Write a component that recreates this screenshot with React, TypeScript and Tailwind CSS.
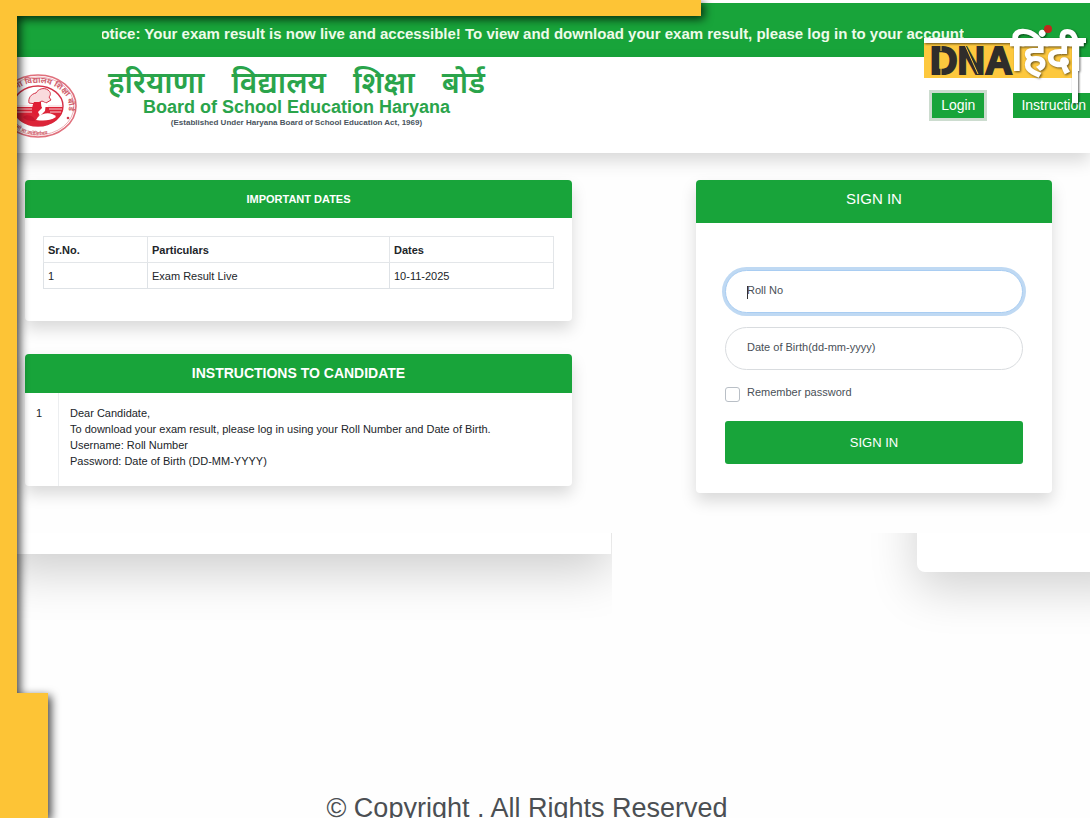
import React, { useState } from 'react';

const IMPORTANT_DATES = [{ id: 1, particulars: 'Exam Result Live', date: '10-11-2025' }];

const INSTRUCTIONS = [
  {
    id: 1,
    lines: [
      'Dear Candidate,',
      'To download your exam result, please log in using your Roll Number and Date of Birth.',
      'Username: Roll Number',
      'Password: Date of Birth (DD-MM-YYYY)'
    ]
  }
];

const BOARD_NAME = ['हरियाणा', 'विद्यालय', 'शिक्षा', 'बोर्ड'];

function BoardSeal() {
  return (
    <svg viewBox="0 0 80 66" className="w-20 h-[66px] shrink-0" aria-hidden="true">
      <defs>
        <path id="sealTop" d="M9 36 A31 24 0 1 1 69 42" />
        <path id="sealBottom" d="M10 42 A31 28 0 0 0 68 46" />
      </defs>
      <ellipse cx="40" cy="33" rx="38" ry="31" fill="#fff" stroke="#e0707c" strokeWidth="1.6" />
      <ellipse cx="40" cy="33" rx="36" ry="29" fill="none" stroke="#eeb2b8" strokeWidth="1" />
      <ellipse cx="40" cy="33" rx="25" ry="20" fill="#fff" stroke="#d43348" strokeWidth="1.4" />
      <path d="M15 34 H65 C65 45 54 53 40 53 C26 53 15 45 15 34Z" fill="#dc2438" />
      <path d="M18 33 H35 M50 33 H64 M19 36 H34 M51 36 H64 M19 39 H34 M52 39 H63" stroke="#f7cdd1" strokeWidth="1" />
      <path
        d="M31 30 C30 25 33 21 38 20 C40 16 46 14 50 17 C53 19 53 22 51 24 L53 27 L48 30 L44 28 L38 31Z"
        fill="#f9dadd"
        stroke="#d43348"
        strokeWidth="1"
      />
      <path d="M36 29 C33 34 34 42 39 43 L44 37 L43 29Z" fill="#e01c34" />
      <path d="M43 29 L48 30 L47 38 L42 43 L40 39 L44 35Z" fill="#fff" />
      <path d="M40 44 C45 39 55 39 58 44 C52 48 45 48 38 47Z" fill="#fff" />
      <path d="M25 44 C30 40 37 44 37 48 C31 48 27 47 25 44Z" fill="#c91830" />
      <circle cx="70" cy="45" r="1.3" fill="#cf3a4b" />
      <text fontSize="8" fontWeight="700" fill="#d0606c">
        <textPath href="#sealTop" startOffset="4">
          हरियाणा विद्यालय शिक्षा बोर्ड
        </textPath>
      </text>
      <text fontSize="5" fontWeight="700" fill="#d0606c">
        <textPath href="#sealBottom" startOffset="8">
          तमसो मा ज्योतिर्गमय
        </textPath>
      </text>
    </svg>
  );
}

function ChannelLogo() {
  return (
    <div className="absolute right-1 top-5 w-[162px] h-[90px] pointer-events-none">
      <svg viewBox="0 0 162 90" className="w-full h-full overflow-visible" role="img" aria-label="DNA हिंदी">
        <rect x="0" y="20" width="148" height="38" fill="#fdc83e" />
        <text
          x="6"
          y="54"
          fontSize="38"
          fontWeight="700"
          fill="#2f2d2b"
          stroke="#2f2d2b"
          strokeWidth="2"
          fontFamily='"Liberation Sans", sans-serif'
        >
          DNA
        </text>
        {/* Stencil cuts */}
        <path d="M17 24 V31 M17 48 V57 M41 25 L54 54" stroke="#fdc83e" strokeWidth="1" />
        <g className="drop-shadow-[1px_1px_1px_rgba(0,0,0,0.6)]">
          <rect x="0" y="18" width="162" height="5" fill="#fff" />
          <text
            x="87"
            y="50"
            fontSize="45"
            fontWeight="400"
            fill="#fff"
            stroke="#fff"
            strokeWidth="2"
            fontFamily='"Noto Sans Devanagari", "Noto Sans", sans-serif'
          >
            हिंदी
          </text>
          <rect x="148" y="20" width="6" height="63" fill="#fff" />
        </g>
        <circle cx="124" cy="9" r="4" fill="#c0281c" />
      </svg>
    </div>
  );
}

function YellowFrame() {
  return (
    <div className="absolute inset-0 overflow-hidden pointer-events-none">
      <div className="w-full h-full drop-shadow-[3px_3px_5px_rgba(0,0,0,0.75)]">
        <div className="absolute left-0 top-0 w-[701px] h-4 bg-[#fdc436]" />
        <div className="absolute left-0 top-0 w-[17px] h-full bg-[#fdc436]" />
        <div className="absolute left-0 top-[693px] bottom-0 w-12 bg-[#fdc436]" />
      </div>
    </div>
  );
}

function SignInCard() {
  const [rollNo, setRollNo] = useState('');
  const [dob, setDob] = useState('');
  const [remember, setRemember] = useState(false);

  return (
    <form
      onSubmit={(e) => e.preventDefault()}
      className="flex-[356] min-w-0 rounded-sm bg-white shadow-[0_8px_16px_rgba(0,0,0,0.15)]"
    >
      <h2 className="h-[43px] pt-[9px] rounded-t-sm bg-[#18a43a] text-center text-[15px] leading-5 text-white">
        SIGN IN
      </h2>
      <div className="px-[29px] pt-[47px] pb-[29px]">
        <div className="relative">
          <input
            type="text"
            aria-label="Roll No"
            placeholder="Roll No"
            value={rollNo}
            onChange={(e) => setRollNo(e.target.value)}
            className="block w-full h-[43px] px-[21px] pb-1 rounded-full border border-[#a9cdf2] bg-white text-[11px] text-[#495057] placeholder:text-[#495057] outline-none ring-3 ring-[#bfd9f3]"
          />
          <span className="absolute left-[22px] top-4 w-px h-[13px] bg-[#333]" />
        </div>
        <input
          type="text"
          aria-label="Date of Birth"
          placeholder="Date of Birth(dd-mm-yyyy)"
          value={dob}
          onChange={(e) => setDob(e.target.value)}
          className="block w-full h-[43px] mt-[14px] px-[21px] pb-1 rounded-full border border-[#d9dcdf] bg-white text-[11px] text-[#495057] placeholder:text-[#495057] outline-none"
        />
        <div className="flex items-start mt-[14px] h-[37px]">
          <input
            id="remember"
            type="checkbox"
            checked={remember}
            onChange={(e) => setRemember(e.target.checked)}
            className="appearance-none w-[15px] h-[15px] mt-[3px] rounded-[3px] border border-[#b9bfc6] bg-white checked:bg-[#18a43a]"
          />
          <label htmlFor="remember" className="ml-[7px] text-[11px] leading-4 text-[#495057]">
            Remember password
          </label>
        </div>
        <button type="submit" className="block w-full h-[43px] rounded-[3px] bg-[#18a43a] text-[13px] text-white">
          SIGN IN
        </button>
      </div>
    </form>
  );
}

export default function App() {
  return (
    <div className="relative min-h-screen flex flex-col overflow-hidden bg-[#fefefe] text-[#212529] font-['Liberation_Sans','Noto_Sans_Devanagari',sans-serif]">
      {/* Scrolling notice */}
      <div className="mt-[3px] h-[54px] pl-[102px] pr-[126px] flex items-center bg-[#18a43a]">
        <div className="flex flex-1 justify-end overflow-hidden pt-2">
          <p className="shrink-0 whitespace-nowrap text-[15px] leading-5 font-bold text-[#eefbe9]">
            Notice: Your exam result is now live and accessible! To view and download your exam result, please log in to
            your account
          </p>
        </div>
      </div>

      {/* Header */}
      <header className="h-24 flex items-start bg-white shadow-[0_8px_16px_rgba(0,0,0,0.15)]">
        <div className="pt-4 -ml-[2px]">
          <BoardSeal />
        </div>
        <div className="ml-[30px] pt-3 flex flex-col items-center text-[#2aa44b]">
          <h1 className="flex gap-[27px] text-[30px] leading-7 font-semibold whitespace-nowrap">
            {BOARD_NAME.map((word) => (
              <span key={word}>{word}</span>
            ))}
          </h1>
          <p className="text-[18px] leading-5 font-bold whitespace-nowrap">Board of School Education Haryana</p>
          <p className="text-[8px] leading-3 font-bold text-[#4a5560] whitespace-nowrap">
            (Established Under Haryana Board of School Education Act, 1969)
          </p>
        </div>
        <nav className="ml-auto pt-9 flex gap-[29px] shrink-0">
          <button type="button" className="h-[25px] px-[9px] bg-[#18a43a] text-[14px] text-white ring-3 ring-[#ccdccf]">
            Login
          </button>
          <button type="button" className="h-[25px] px-2 -mr-1 bg-[#18a43a] text-[14px] text-white">
            Instruction
          </button>
        </nav>
      </header>

      {/* Content */}
      <main className="flex items-start gap-[124px] pt-[27px] pl-[25px] pr-[38px] pb-10">
        <div className="flex-[547] min-w-0 space-y-[33px]">
          <section className="rounded-sm bg-white shadow-[0_8px_16px_rgba(0,0,0,0.15)]">
            <h2 className="h-[38px] rounded-t-sm bg-[#18a43a] text-center text-[11px] leading-[38px] font-bold text-white">
              IMPORTANT DATES
            </h2>
            <div className="px-[18px] pt-[18px] pb-8">
              <table className="w-full table-fixed border-collapse text-[11px] leading-4 text-left">
                <thead>
                  <tr>
                    <th className="w-[104px] h-[26px] px-1 border border-[#e3e6e9]">Sr.No.</th>
                    <th className="w-[242px] px-1 border border-[#e3e6e9]">Particulars</th>
                    <th className="px-1 border border-[#e3e6e9]">Dates</th>
                  </tr>
                </thead>
                <tbody>
                  {IMPORTANT_DATES.map((row) => (
                    <tr key={row.id}>
                      <td className="h-[26px] px-1 border border-[#dee2e6]">{row.id}</td>
                      <td className="px-1 border border-[#dee2e6]">{row.particulars}</td>
                      <td className="px-1 border border-[#dee2e6]">{row.date}</td>
                    </tr>
                  ))}
                </tbody>
              </table>
            </div>
          </section>

          <section className="rounded-sm bg-white shadow-[0_8px_16px_rgba(0,0,0,0.15)]">
            <h2 className="h-[39px] rounded-t-sm bg-[#18a43a] text-center text-[14px] leading-[38px] font-bold text-white">
              INSTRUCTIONS TO CANDIDATE
            </h2>
            {INSTRUCTIONS.map((item) => (
              <div key={item.id} className="flex text-[11px] leading-4">
                <div className="w-[34px] pl-[11px] pt-3 border-r border-[#eceef0]">{item.id}</div>
                <div className="pl-[11px] pt-3 pb-[17px]">
                  {item.lines.map((line) => (
                    <p key={line}>{line}</p>
                  ))}
                </div>
              </div>
            ))}
          </section>
        </div>

        <SignInCard />
      </main>

      {/* Lower edges of the page panels */}
      <div className="flex justify-between">
        <div className="w-[612px] h-32 overflow-hidden">
          <div className="h-[221px] -mt-[200px] mr-px bg-white shadow-[0_16px_48px_rgba(0,0,0,0.2)]" />
        </div>
        <div className="w-[222px] h-32 pl-[49px] overflow-hidden">
          <div className="h-[239px] -mt-[200px] -mr-12 rounded-bl-lg bg-white shadow-[0_16px_48px_rgba(0,0,0,0.18)]" />
        </div>
      </div>

      <footer className="mt-auto pr-9 text-center text-[27px] leading-5 text-[#4b4f53]">
        © Copyright . All Rights Reserved
      </footer>

      <ChannelLogo />
      <YellowFrame />
    </div>
  );
}
